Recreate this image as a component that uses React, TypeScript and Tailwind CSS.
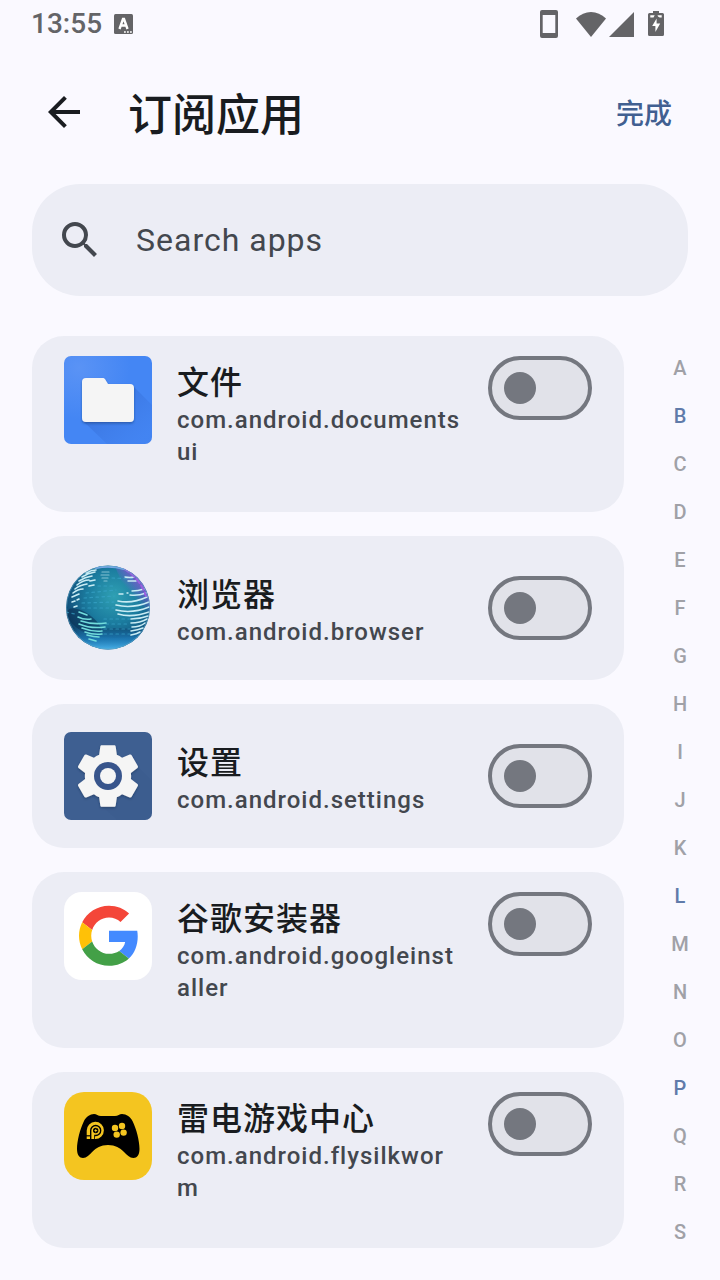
import { useState } from "react";
import type { ReactNode } from "react";
import { MdArrowBack, MdSearch } from "react-icons/md";

type AppItem = {
  name: string;
  pkg: string;
  icon: ReactNode;
};

const StatusBar = () => (
  <div className="flex h-12 items-center justify-between pl-[31px] pr-14 text-[#646467]">
    <div className="flex items-center gap-3">
      <span className="text-[28px] leading-8 font-medium">13:55</span>
      <svg width="20" height="20" viewBox="0 0 20 20" aria-hidden="true">
        <rect width="19" height="20" rx="1.5" fill="currentColor" />
        <path d="M5.500 15 9 5h1l3.500 10M6.800 11.500h5.600" fill="none" stroke="#fff" strokeWidth="2.400" />
        <path d="M10 17.2h1.8v1.6H10zM13 17.2h1.8v1.6H13zM16 17.2h1.8v1.6H16z" fill="#fff" />
      </svg>
    </div>
    <div className="flex items-center">
      <svg width="18" height="28" viewBox="0 0 18 28" className="mr-[18px]" aria-hidden="true">
        <path
          fillRule="evenodd"
          fill="currentColor"
          d="M2 0h14a2 2 0 0 1 2 2v24a2 2 0 0 1-2 2H2a2 2 0 0 1-2-2V2a2 2 0 0 1 2-2zM2.7 5v18h12.6V5z"
        />
      </svg>
      <svg width="30" height="25" viewBox="0 0 30 25" className="mr-[3px]" aria-hidden="true">
        <path fill="currentColor" d="M15 25 0 6.5C4.500 2.300 9.500 0 15 0s10.500 2.300 15 6.500z" />
      </svg>
      <svg width="25" height="25" viewBox="0 0 25 25" className="mr-[14px]" aria-hidden="true">
        <path fill="currentColor" d="M25 0v25H0z" />
      </svg>
      <svg width="16" height="26" viewBox="0 0 16 26" aria-hidden="true">
        <path
          fill="currentColor"
          d="M5 0h6v2h3.500A1.500 1.500 0 0 1 16 3.500v20a1.500 1.500 0 0 1-1.500 1.500h-13A1.500 1.500 0 0 1 0 23.500v-20A1.500 1.500 0 0 1 1.500 2H5z"
        />
        <path fill="#fff" d="M2.300 4.300h4.400L5.500 6.500H2.300zM9.500 4.300h4.200v2.200h-2L10 5.500zM8.600 7.500v5h3.600L7.400 21v-6H4.200z" />
      </svg>
    </div>
  </div>
);

const FilesIcon = () => (
  <svg viewBox="0 0 88 88" className="size-22">
    <defs>
      <radialGradient id="filesBg" cx="15" cy="12" r="85" gradientUnits="userSpaceOnUse">
        <stop offset="0" stopColor="#5a93f5" />
        <stop offset=".6" stopColor="#4486f4" />
        <stop offset="1" stopColor="#4486f4" />
      </radialGradient>
      <linearGradient id="filesShade" x1="50" y1="45" x2="80" y2="80" gradientUnits="userSpaceOnUse">
        <stop offset="0" stopColor="#2d5fc4" stopOpacity=".35" />
        <stop offset="1" stopColor="#3c78e4" stopOpacity=".15" />
      </linearGradient>
      <filter id="filesDrop" x="-20%" y="-20%" width="140%" height="150%">
        <feDropShadow dx="0" dy="1.500" stdDeviation="1.200" floodColor="#16366f" floodOpacity=".5" />
      </filter>
    </defs>
    <rect width="88" height="88" rx="7" fill="url(#filesBg)" />
    <path d="M69 30 88 49v32a7 7 0 0 1-7 7H43L19 65z" fill="url(#filesShade)" />
    <path
      d="M22 22h16.500c1.200 0 2 .4 2.600 1.200L44 28h22a4 4 0 0 1 4 4v30a4 4 0 0 1-4 4H22a4 4 0 0 1-4-4V26a4 4 0 0 1 4-4z"
      fill="#f5f5f5"
      filter="url(#filesDrop)"
    />
  </svg>
);

const BrowserIcon = () => (
  <svg viewBox="0 0 88 88" className="size-22">
    <defs>
      <radialGradient id="globe" cx="50" cy="32" r="54" gradientUnits="userSpaceOnUse">
        <stop offset="0" stopColor="#2fa0b3" />
        <stop offset=".5" stopColor="#1b7c9f" />
        <stop offset=".85" stopColor="#13557f" />
        <stop offset="1" stopColor="#0f4068" />
      </radialGradient>
      <linearGradient id="globeBottom" x1="0" y1="64" x2="0" y2="86" gradientUnits="userSpaceOnUse">
        <stop offset="0" stopColor="#1d83c4" stopOpacity="0" />
        <stop offset=".5" stopColor="#1f7fbd" stopOpacity=".8" />
        <stop offset="1" stopColor="#4cb6ee" />
      </linearGradient>
      <linearGradient id="globeViolet" x1="54" y1="36" x2="78" y2="16" gradientUnits="userSpaceOnUse">
        <stop offset=".45" stopColor="#8a5be0" stopOpacity="0" />
        <stop offset="1" stopColor="#8258cc" />
      </linearGradient>
      <clipPath id="globeClip">
        <circle cx="44" cy="43.500" r="42" />
      </clipPath>
    </defs>
    <g clipPath="url(#globeClip)" fill="none" strokeLinecap="round">
      <rect width="88" height="88" fill="url(#globe)" />
      <ellipse cx="20" cy="58" rx="20" ry="9" fill="#08294c" opacity=".5" transform="rotate(35 20 58)" />
      <ellipse cx="52" cy="69" rx="28" ry="5" fill="#0a3a62" opacity=".45" />
      <rect y="58" width="88" height="30" fill="url(#globeBottom)" />
      <path d="M50 0h38v48H70z" fill="url(#globeViolet)" />
      <g stroke="#3ba6cb" strokeWidth="1.200" strokeDasharray="2.500 3.500" opacity=".65">
        <path d="M48 14l22 1M22 29l30-3M20 34l30-2M18 39l32-1M18 44h32M40 55h26M42 60h24M40 65h26M40 70h26M34 22h18M2 48l9 2" />
      </g>
      <g stroke="#c9ecf4" strokeWidth="1.600">
        <path d="M22 9q5-3 10-3M18 13q6-4 13-5M15 17q6-4 13-5M13 21q6-5 12-5M11 25q5-4 12-5M9 29q5-4 10-4M8 33l7-3M8 38l3-1M13 36l2-1M10 43l3-1M26 17l5-1M25 22l5-1" />
        <path d="M38 8h7M37 11h8M38 14h6M40 17h3" strokeWidth="1.200" opacity=".6" />
        <path d="M61 13q5 1 9 0M64 17h8M55 30h4M63 29l1 0M68 27q6 0 12-2M66 31q8 1 16-2" strokeWidth="1.400" />
        <path d="M54 37q14 3 29-4M52 41q16 4 33-3M52 46q16 4 33-3M54 50q14 4 31-2M67 55q9 0 17-3M67 59q9 0 16-4M68 63q8 0 13-4M67 67q7-1 12-3M67 71q6-1 9-3" />
      </g>
      <g stroke="#72dcdc" strokeWidth="1.600">
        <path d="M15 48l8 3M14 53q6 3 13 2M17 57q12 4 25 2M15 60q12 5 26 3M18 64q10 4 20 3M21 68q8 3 17 2M23 71q7 2 12 2M25 75l7 2" />
      </g>
      <path d="M60 5q16 9 22 27" stroke="#9a5fe0" strokeWidth="2" strokeDasharray="5 3" />
      <path d="M32 4q14-3 28 1" stroke="#79a9e8" strokeWidth="2" />
      <circle cx="44" cy="43.500" r="41.500" stroke="#5fa7c6" strokeWidth="1" opacity=".6" />
    </g>
  </svg>
);

const SettingsIcon = () => (
  <svg viewBox="0 0 88 88" className="size-22">
    <defs>
      <filter id="gearDrop" x="-20%" y="-20%" width="140%" height="150%">
        <feDropShadow dx="0" dy=".4" stdDeviation=".4" floodColor="#16284d" floodOpacity=".5" />
      </filter>
    </defs>
    <rect width="88" height="88" rx="7" fill="#3e5f91" />
    <path d="M65 26 88 49v32a7 7 0 0 1-7 7H53L18 55z" fill="#38588a" opacity=".3" />
    <g transform="translate(7 7) scale(3.083)">
      <path
        filter="url(#gearDrop)"
        fill="#f5f5f5"
        d="M19.430 12.980c.04-.32.07-.64.07-.98s-.03-.66-.07-.98l2.110-1.650c.19-.15.24-.42.12-.64l-2-3.460c-.12-.22-.39-.3-.61-.22l-2.490 1c-.52-.4-1.080-.73-1.690-.98l-.38-2.650C14.460 2.180 14.250 2 14 2h-4c-.25 0-.46.18-.49.42l-.38 2.650c-.61.25-1.170.59-1.690.98l-2.490-1c-.23-.09-.49 0-.61.22l-2 3.460c-.13.22-.07.49.12.64l2.110 1.650c-.04.32-.07.65-.07.98s.03.66.07.98l-2.110 1.650c-.19.15-.24.42-.12.64l2 3.460c.12.22.39.3.61.22l2.490-1c.52.4 1.080.73 1.690.98l.38 2.650c.03.24.24.42.49.42h4c.25 0 .46-.18.49-.42l.38-2.650c.61-.25 1.170-.59 1.690-.98l2.490 1c.23.09.49 0 .61-.22l2-3.460c.12-.22.07-.49-.12-.64l-2.110-1.650z"
      />
    </g>
    <circle cx="44" cy="44" r="14" fill="#38558c" />
    <circle cx="44" cy="44" r="8" fill="#f5f5f5" />
  </svg>
);

const GoogleIcon = () => (
  <svg viewBox="0 0 88 88" className="size-22">
    <rect width="88" height="88" rx="18" fill="#fff" />
    <g transform="translate(15 13.700) scale(1.250)">
      <path fill="#f44639" d="M24 9.500c3.540 0 6.710 1.220 9.210 3.600l6.850-6.850C35.900 2.380 30.470 0 24 0 14.620 0 6.510 5.380 2.560 13.220l7.980 6.190C12.430 13.720 17.740 9.500 24 9.500z" />
      <path fill="#448aff" d="M46.980 24.550c0-1.570-.15-3.090-.38-4.550H24v9.020h12.940c-.58 2.960-2.260 5.480-4.780 7.180l7.730 6c4.510-4.180 7.090-10.360 7.090-17.650z" />
      <path fill="#ffc107" d="M10.530 28.590c-.48-1.450-.76-2.990-.76-4.590s.27-3.140.76-4.590l-7.980-6.190C.92 16.460 0 20.120 0 24c0 3.880.92 7.540 2.560 10.780l7.970-6.190z" />
      <path fill="#43a047" d="M24 48c6.480 0 11.930-2.130 15.890-5.810l-7.730-6c-2.150 1.450-4.920 2.300-8.160 2.300-6.260 0-11.570-4.220-13.470-9.910l-7.980 6.190C6.510 42.620 14.620 48 24 48z" />
    </g>
  </svg>
);

const GameIcon = () => (
  <svg viewBox="0 0 88 88" className="size-22">
    <rect width="88" height="88" rx="20" fill="#f4c520" />
    <path d="M30 22C26 22 22 25 20 29 16 37 13 49 13 57c0 6 2.500 9 6 9 7.500 0 10-13 25-13s18 13 25.500 13c3.500 0 6-3 6-9 0-8-3-20-7-28-2-4-6-7-10.500-7-2.500 0-4 2-7 2H37c-3 0-4.500-2-7-2z" />
    <path d="M22.700 47v-8.500a8.600 8.600 0 1 1 8.600 8.500z" fill="#f4c520" />
    <path d="M26 48v-9.500a5.700 5.700 0 1 1 5.700 5.700H31V48z" />
    <path d="M22 43.200h5v1.200h-5z" />
    <path d="M27.400 47v-8.500a4.300 4.300 0 1 1 4.300 4.300h-1.500V47z" fill="#f4c520" />
    <circle cx="31.700" cy="38.500" r="2.700" />
    <path d="m32.600 36.200-2.600 2.700h1.500l-.5 1.900 2.500-2.700H32z" fill="#f4c520" />
    <g fill="#f4c520">
      <circle cx="51" cy="36" r="3.200" />
      <circle cx="58" cy="34" r="3.200" />
      <circle cx="52.700" cy="42.600" r="3.200" />
      <circle cx="59.600" cy="40.600" r="3.200" />
    </g>
  </svg>
);

const apps: AppItem[] = [
  { name: "文件", pkg: "com.android.documentsui", icon: <FilesIcon /> },
  { name: "浏览器", pkg: "com.android.browser", icon: <BrowserIcon /> },
  { name: "设置", pkg: "com.android.settings", icon: <SettingsIcon /> },
  { name: "谷歌安装器", pkg: "com.android.googleinstaller", icon: <GoogleIcon /> },
  { name: "雷电游戏中心", pkg: "com.android.flysilkworm", icon: <GameIcon /> },
];

const letters = "ABCDEFGHIJKLMNOPQRS".split("");
const activeLetters = ["B", "L", "P"];

const AppCard = ({ app }: { app: AppItem }) => {
  const [checked, setChecked] = useState(false);
  // package names too long for one line get the taller, top-aligned card
  const tall = app.pkg.length > 20;

  return (
    <li
      className={
        tall
          ? "flex min-h-44 items-start gap-[25px] rounded-[32px] bg-[#ecedf5] px-8 py-5"
          : "flex min-h-36 items-center gap-[25px] rounded-[32px] bg-[#ecedf5] px-8 py-5"
      }
    >
      <div className="shrink-0">{app.icon}</div>
      <label htmlFor={app.pkg} className="min-w-0 flex-1 font-medium tracking-[1px]">
        <span className="block pt-1.5 text-[32px] leading-[42px] text-[#191c20]">{app.name}</span>
        <span className="block text-2xl leading-8 break-all text-[#43474e]">{app.pkg}</span>
      </label>
      <input
        id={app.pkg}
        type="checkbox"
        role="switch"
        checked={checked}
        onChange={(e) => setChecked(e.target.checked)}
        className="flex h-16 w-26 shrink-0 cursor-pointer appearance-none items-center rounded-full border-4 border-[#74777f] bg-[#e1e2e9] px-3 before:size-8 before:rounded-full before:bg-[#74777f] checked:justify-end checked:border-[#415f91] checked:bg-[#415f91] checked:before:bg-white"
      />
    </li>
  );
};

const App = () => {
  const [search, setSearch] = useState("");

  return (
    <div className="min-h-screen bg-[#faf9ff] font-['Roboto','Noto_Sans_CJK_SC',sans-serif] text-[#191c20]">
      <StatusBar />
      <header className="flex h-32 items-center pl-10 pr-12">
        <button type="button" aria-label="返回" className="mr-10 cursor-pointer">
          <MdArrowBack className="size-12" />
        </button>
        <h1 className="flex-1 pt-2 text-[44px] leading-[56px] font-medium">订阅应用</h1>
        <button type="button" className="cursor-pointer pt-1.5 text-[28px] leading-10 font-medium text-[#415f91]">
          完成
        </button>
      </header>

      <div className="mx-8 mt-2 flex h-28 items-center gap-8 rounded-[48px] bg-[#ecedf5] px-6 text-[#43474e]">
        <MdSearch className="size-12 shrink-0" />
        <input
          type="text"
          aria-label="Search apps"
          placeholder="Search apps"
          value={search}
          onChange={(e) => setSearch(e.target.value)}
          className="min-w-0 flex-1 bg-transparent text-[32px] leading-[48px] tracking-[1px] outline-none placeholder:text-[#43474e]"
        />
      </div>

      <main className="mt-10 flex items-start pl-8">
        <ul className="flex min-w-0 flex-1 flex-col gap-6">
          {apps.map((app) => (
            <AppCard key={app.pkg} app={app} />
          ))}
        </ul>
        <nav className="flex w-24 flex-col items-center pt-2 pl-4">
          {letters.map((l) => (
            <button
              key={l}
              type="button"
              className={
                activeLetters.includes(l)
                  ? "h-12 w-12 cursor-pointer text-xl font-medium text-[#607baa]"
                  : "h-12 w-12 cursor-pointer text-xl font-medium text-[#a0a1a7]"
              }
            >
              {l}
            </button>
          ))}
        </nav>
      </main>
    </div>
  );
};

export default App;
